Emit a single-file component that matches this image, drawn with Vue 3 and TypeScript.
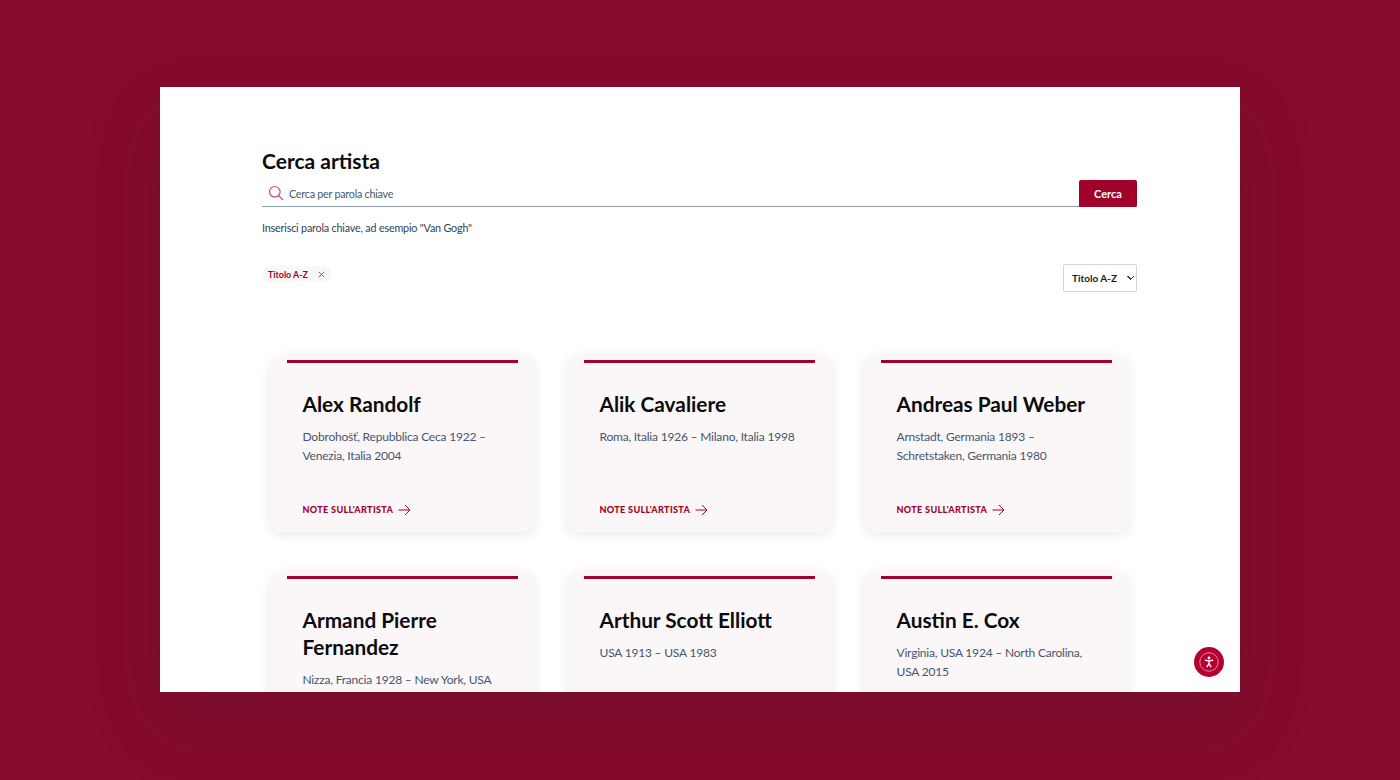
<script setup lang="ts">
interface Artist {
  name: string
  note: string
}

const artists: Artist[] = [
  { name: 'Alex Randolf', note: 'Dobrohošť, Repubblica Ceca 1922 – Venezia, Italia 2004' },
  { name: 'Alik Cavaliere', note: 'Roma, Italia 1926 – Milano, Italia 1998' },
  { name: 'Andreas Paul Weber', note: 'Arnstadt, Germania 1893 – Schretstaken, Germania 1980' },
  { name: 'Armand Pierre Fernandez', note: 'Nizza, Francia 1928 – New York, USA 2005' },
  { name: 'Arthur Scott Elliott', note: 'USA 1913 – USA 1983' },
  { name: 'Austin E. Cox', note: 'Virginia, USA 1924 – North Carolina, USA 2015' },
]
</script>

<template>
  <main class="stage">
    <section class="panel">
      <div class="search">
        <h1>Cerca artista</h1>
        <form class="search-row" @submit.prevent>
          <svg class="search-icon" width="16" height="16" viewBox="0 0 16 16" fill="none">
            <circle cx="6.8" cy="6.8" r="5.3" />
            <path d="M10.6 10.6 15 15" />
          </svg>
          <input type="text" placeholder="Cerca per parola chiave" />
          <button type="submit">Cerca</button>
        </form>
        <p class="hint">Inserisci parola chiave, ad esempio "Van Gogh"</p>
        <div class="filters">
          <span class="chip">
            Titolo A-Z
            <svg width="7" height="7" viewBox="0 0 7 7"><path d="M.8.8l5.4 5.4M6.2.8.8 6.2" /></svg>
          </span>
          <select class="sort">
            <option>Titolo A-Z</option>
          </select>
        </div>
      </div>

      <div class="grid">
        <article v-for="artist in artists" :key="artist.name" class="card">
          <h2>{{ artist.name }}</h2>
          <p>{{ artist.note }}</p>
          <a class="more" href="#" @click.prevent>
            NOTE SULL'ARTISTA
            <svg width="13" height="12" viewBox="0 0 13 12" fill="none"><path d="M.5 6h11.4M7 1l5 5-5 5" /></svg>
          </a>
        </article>
      </div>

      <button class="a11y" type="button" aria-label="Accessibilità">
        <svg width="20" height="20" viewBox="0 0 20 20" fill="none">
          <circle class="ring" cx="10" cy="10" r="9.2" />
          <circle class="head" cx="10" cy="6" r="1.4" />
          <path class="body" d="M5.8 8.2 10 9l4.2-.8M10 9v2.6M10 11.6l-2.2 3.6M10 11.6l2.2 3.6" />
        </svg>
      </button>
    </section>
  </main>
</template>

<style>
html,
body {
  margin: 0;
  overflow: hidden;
}
</style>

<style scoped>
.stage {
  box-sizing: border-box;
  width: 1400px;
  height: 780px;
  padding: 87px 160px 88px;
  background: #860b2c;
  font-family: Lato, "Noto Sans", sans-serif;
  overflow: hidden;
}

.panel {
  position: relative;
  height: 605px;
  background: #fff;
  box-shadow: 0 30px 70px rgba(60, 30, 40, 0.2);
  overflow: hidden;
}

.search {
  padding: 62px 103px 0 102px;
}

h1 {
  margin: 0;
  color: #0b0b0d;
  font-size: 21px;
  line-height: 24px;
  font-weight: 700;
}

.search-row {
  display: flex;
  align-items: center;
  height: 26px;
  margin-top: 7px;
  border-bottom: 1px solid #8d9db3;
}

.search-icon {
  margin-left: 6px;
  flex: none;
  stroke: #c2486a;
  stroke-width: 1.2;
}

input {
  flex: 1;
  min-width: 0;
  margin-left: 5px;
  border: 0;
  outline: none;
  padding: 0;
  background: transparent;
  color: #47586e;
  font: 400 10.8px Lato, "Noto Sans", sans-serif;
  letter-spacing: -0.26px;
}

input::placeholder {
  color: #47586e;
  opacity: 1;
}

button[type='submit'] {
  align-self: stretch;
  width: 58px;
  margin-bottom: -1px;
  border: 0;
  border-radius: 2px 2px 2px 0;
  background: #a00229;
  color: #fff;
  font: 700 11px Lato, "Noto Sans", sans-serif;
}

.hint {
  margin: 14px 0 0;
  color: #34424f;
  font-size: 10.8px;
  line-height: 14px;
  letter-spacing: -0.2px;
}

.filters {
  display: flex;
  justify-content: space-between;
  align-items: flex-start;
  margin-top: 29px;
}

.chip {
  display: inline-flex;
  align-items: center;
  gap: 10px;
  height: 16px;
  margin-top: 2px;
  padding: 0 6px;
  border-radius: 8px;
  background: #f9f6f7;
  color: #a00229;
  font-size: 8.9px;
  font-weight: 700;
}

.chip svg {
  stroke: #5b6675;
  stroke-width: 1;
}

.sort {
  appearance: none;
  box-sizing: border-box;
  width: 74px;
  height: 28px;
  padding: 0 0 0 8px;
  border: 1px solid #d3d5d8;
  border-radius: 2px;
  background:
    linear-gradient(45deg, transparent 50%, #333 50%, #333 65%, transparent 65%) right 5px center / 4px 4px no-repeat,
    linear-gradient(135deg, transparent 35%, #333 35%, #333 50%, transparent 50%) right 1px center / 4px 4px no-repeat,
    #fff;
  color: #17191c;
  font: 700 10px Lato, "Noto Sans", sans-serif;
}

.grid {
  display: grid;
  grid-template-columns: repeat(3, 265px);
  gap: 39px 32px;
  padding: 63px 0 0 110px;
}

.card {
  position: relative;
  box-sizing: border-box;
  display: flex;
  flex-direction: column;
  height: 177px;
  padding: 35px 32px 0 32.5px;
  border-radius: 14px;
  background: #fbf7f8;
  box-shadow: 0 3px 12px rgba(60, 40, 50, 0.1);
}

.card::before {
  content: '';
  position: absolute;
  top: 5px;
  left: 17px;
  right: 17px;
  height: 3px;
  background: #a00229;
}

h2 {
  margin: 0;
  color: #0b0b0d;
  font-size: 20.8px;
  line-height: 27px;
  font-weight: 700;
}

.card p {
  margin: 10px 0 0;
  color: #46566c;
  font-size: 12px;
  line-height: 19px;
  letter-spacing: -0.2px;
}

.more {
  position: absolute;
  left: 32.5px;
  top: 149px;
  display: flex;
  align-items: center;
  gap: 5px;
  color: #a00229;
  font-size: 9.1px;
  line-height: 12px;
  font-weight: 900;
  letter-spacing: 0.3px;
  text-decoration: none;
}

.more svg {
  stroke: #a00229;
  stroke-width: 1;
}

.a11y {
  position: absolute;
  top: 560px;
  left: 1034px;
  display: grid;
  place-items: center;
  width: 30px;
  height: 30px;
  padding: 0;
  border: 0;
  border-radius: 50%;
  background: #b5002f;
}

.ring {
  stroke: #e58aa3;
  stroke-width: 1;
}

.head {
  fill: #fff;
}

.body {
  stroke: #fff;
  stroke-width: 1.3;
}
</style>
